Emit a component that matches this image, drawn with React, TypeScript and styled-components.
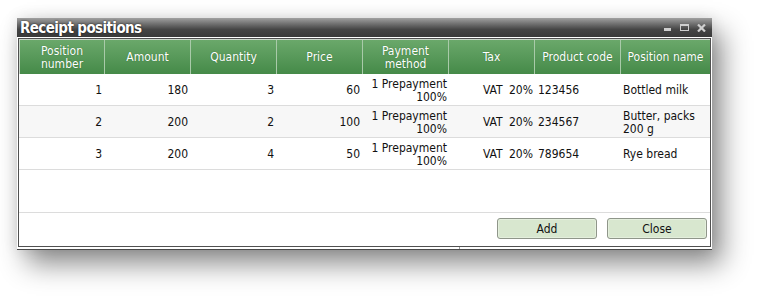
import React from "react";
import styled, { createGlobalStyle } from "styled-components";

const GlobalStyle = createGlobalStyle`
  html, body { margin: 0; padding: 0; background: #ffffff; }
  body { font-family: "DejaVu Sans Condensed", "DejaVu Sans", sans-serif; font-stretch: condensed; }
`;

const Page = styled.div`
  padding: 18px 0 0 17px;
  width: 760px;
  height: 299px;
  box-sizing: border-box;
  overflow: hidden;
`;

const Window = styled.div`
  width: 695px;
  background: #ffffff;
  border-bottom: 1px solid #4a4a4a;
  box-shadow: 10px 14px 26px rgba(0, 0, 0, 0.45), 0 0 14px rgba(0, 0, 0, 0.1);
  display: flex;
  flex-direction: column;
`;

const TitleBar = styled.div`
  height: 19px;
  display: flex;
  align-items: center;
  justify-content: space-between;
  padding: 0 6px 0 3px;
  background: linear-gradient(#a0a0a0 0%, #6a6a6a 35%, #454545 60%, #3a3a3a 100%);
  margin-bottom: 1px;
`;

const Title = styled.div`
  color: #ffffff;
  font-weight: bold;
  font-size: 15px;
  letter-spacing: -0.6px;
  text-shadow: 0 0 2px rgba(0, 0, 0, 0.8);
`;

const Controls = styled.div`
  display: flex;
  align-items: center;
  gap: 8px;
  padding-top: 1px;
`;

const Frame = styled.div`
  margin: 0 1px;
  border: 1px solid #505050;
  display: flex;
  flex-direction: column;
`;

const cols = "86px 86px 86px 86px 86px 86px 86px 89px";

const HeaderRow = styled.div`
  display: grid;
  grid-template-columns: ${cols};
  height: 35px;
  box-sizing: border-box;
  border-top: 1px solid #c9d6c9;
`;

const HeaderCell = styled.div<{ first?: boolean }>`
  display: flex;
  align-items: center;
  justify-content: center;
  text-align: center;
  padding-top: 1px;
  color: #ffffff;
  font-size: 12px;
  line-height: 13px;
  background: linear-gradient(#6aa86a 0%, #58995a 50%, #458a48 100%);
  border-right: 1px solid #a9caa9;
  border-left: ${(p) => (p.first ? "1px solid #c9d6c9" : "0")};
  text-shadow: 0 0 1px rgba(0, 60, 0, 0.5);
  &:last-child { border-right: 0; }
`;

const Body = styled.div`
  height: 138px;
  border-bottom: 1px solid #dcdcdc;
`;

const Row = styled.div<{ alt?: boolean }>`
  display: grid;
  grid-template-columns: ${cols};
  height: 32px;
  box-sizing: border-box;
  border-bottom: 1px solid #dcdcdc;
  background: ${(p) => (p.alt ? "#f7f7f7" : "#ffffff")};
`;

const Cell = styled.div<{ align?: "left" | "right"; pr?: number; pl?: number; ws?: number }>`
  display: flex;
  align-items: center;
  justify-content: ${(p) => (p.align === "left" ? "flex-start" : "flex-end")};
  text-align: ${(p) => p.align ?? "right"};
  padding: 2px ${(p) => p.pr ?? 3}px 0 ${(p) => p.pl ?? 3}px;
  font-size: 12px;
  line-height: 13px;
  word-spacing: ${(p) => p.ws ?? 0}px;
  color: #111111;
  overflow: hidden;
`;

const Footer = styled.div`
  height: 33px;
  box-sizing: border-box;
  display: flex;
  justify-content: flex-end;
  align-items: flex-start;
  gap: 10px;
  padding: 5px 3px 0 0;
`;

const Button = styled.button`
  width: 100px;
  height: 21px;
  border: 1px solid #8f968a;
  border-radius: 3px;
  background: #d8e7cf;
  font-family: inherit;
  font-stretch: condensed;
  font-size: 12px;
  color: #111111;
  padding: 1px 0 0;
  box-shadow: inset 0 0 0 1px #e4efdd;
`;

const StatusStrip = styled.div`
  height: 2px;
  display: flex;
`;

const StatusPart = styled.div<{ w?: number }>`
  width: ${(p) => (p.w ? `${p.w}px` : "auto")};
  flex: ${(p) => (p.w ? "none" : "1")};
  border-right: ${(p) => (p.w ? "1px solid #9a9a9a" : "0")};
`;

const Icon = styled.svg`
  display: block;
`;

const headers = [
  "Position number",
  "Amount",
  "Quantity",
  "Price",
  "Payment method",
  "Tax",
  "Product code",
  "Position name",
];

const rows = [
  { n: "1", amount: "180", qty: "3", price: "60", code: "123456", name: "Bottled milk" },
  { n: "2", amount: "200", qty: "2", price: "100", code: "234567", name: "Butter, packs 200 g" },
  { n: "3", amount: "200", qty: "4", price: "50", code: "789654", name: "Rye bread" },
];

export default function App() {
  return (
    <>
      <GlobalStyle />
      <Page>
        <Window>
          <TitleBar>
            <Title>Receipt positions</Title>
            <Controls>
              <Icon width="8" height="8" viewBox="0 0 8 8">
                <rect x="0" y="4" width="7" height="3" fill="#cfcfcf" />
              </Icon>
              <Icon width="9" height="8" viewBox="0 0 9 8">
                <rect x="0.5" y="0.5" width="8" height="6" fill="none" stroke="#cfcfcf" />
                <rect x="0" y="0" width="9" height="2" fill="#cfcfcf" />
              </Icon>
              <Icon width="9" height="8" viewBox="0 0 9 8">
                <path d="M1 0.5 L8 7.5 M8 0.5 L1 7.5" stroke="#cfcfcf" strokeWidth="2.2" />
              </Icon>
            </Controls>
          </TitleBar>
          <Frame>
            <HeaderRow>
              {headers.map((h, i) => (
                <HeaderCell key={h} first={i === 0}>
                  {h}
                </HeaderCell>
              ))}
            </HeaderRow>
            <Body>
              {rows.map((r, i) => (
                <Row key={r.n} alt={i === 1}>
                  <Cell>{r.n}</Cell>
                  <Cell>{r.amount}</Cell>
                  <Cell>{r.qty}</Cell>
                  <Cell>{r.price}</Cell>
                  <Cell pr={2}>1 Prepayment 100%</Cell>
                  <Cell pr={2} ws={3}>VAT 20%</Cell>
                  <Cell align="left">{r.code}</Cell>
                  <Cell align="left" pl={2}>{r.name}</Cell>
                </Row>
              ))}
            </Body>
            <Footer>
              <Button>Add</Button>
              <Button>Close</Button>
            </Footer>
          </Frame>
          <StatusStrip>
            <StatusPart w={442} />
            <StatusPart />
          </StatusStrip>
        </Window>
      </Page>
    </>
  );
}
